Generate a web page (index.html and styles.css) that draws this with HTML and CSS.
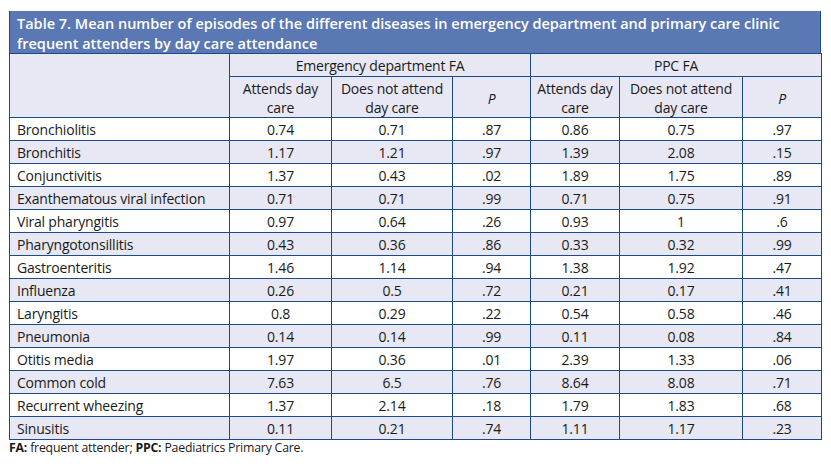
FILE: index.html
```html
<!DOCTYPE html>
<html>
<head>
<meta charset="utf-8">
<link rel="stylesheet" href="styles.css">
</head>
<body>
<div class="wrap">
  <div class="title">Table 7. Mean number of episodes of the different diseases in emergency department and primary care clinic frequent attenders by day care attendance</div>
  <table class="data">
    <colgroup>
      <col class="c1"><col class="c2"><col class="c3"><col class="c4"><col class="c5"><col class="c6"><col class="c7">
    </colgroup>
    <thead>
      <tr class="h1">
        <th rowspan="2"></th>
        <th colspan="3">Emergency department FA</th>
        <th colspan="3">PPC FA</th>
      </tr>
      <tr class="h2">
        <th>Attends day care</th>
        <th>Does not attend day care</th>
        <th><i>P</i></th>
        <th>Attends day care</th>
        <th>Does not attend day care</th>
        <th><i>P</i></th>
      </tr>
    </thead>
    <tbody>
      <tr><td>Bronchiolitis</td><td>0.74</td><td>0.71</td><td>.87</td><td>0.86</td><td>0.75</td><td>.97</td></tr>
      <tr><td>Bronchitis</td><td>1.17</td><td>1.21</td><td>.97</td><td>1.39</td><td>2.08</td><td>.15</td></tr>
      <tr><td>Conjunctivitis</td><td>1.37</td><td>0.43</td><td>.02</td><td>1.89</td><td>1.75</td><td>.89</td></tr>
      <tr><td>Exanthematous viral infection</td><td>0.71</td><td>0.71</td><td>.99</td><td>0.71</td><td>0.75</td><td>.91</td></tr>
      <tr><td>Viral pharyngitis</td><td>0.97</td><td>0.64</td><td>.26</td><td>0.93</td><td>1</td><td>.6</td></tr>
      <tr><td>Pharyngotonsillitis</td><td>0.43</td><td>0.36</td><td>.86</td><td>0.33</td><td>0.32</td><td>.99</td></tr>
      <tr><td>Gastroenteritis</td><td>1.46</td><td>1.14</td><td>.94</td><td>1.38</td><td>1.92</td><td>.47</td></tr>
      <tr><td>Influenza</td><td>0.26</td><td>0.5</td><td>.72</td><td>0.21</td><td>0.17</td><td>.41</td></tr>
      <tr><td>Laryngitis</td><td>0.8</td><td>0.29</td><td>.22</td><td>0.54</td><td>0.58</td><td>.46</td></tr>
      <tr><td>Pneumonia</td><td>0.14</td><td>0.14</td><td>.99</td><td>0.11</td><td>0.08</td><td>.84</td></tr>
      <tr><td>Otitis media</td><td>1.97</td><td>0.36</td><td>.01</td><td>2.39</td><td>1.33</td><td>.06</td></tr>
      <tr><td>Common cold</td><td>7.63</td><td>6.5</td><td>.76</td><td>8.64</td><td>8.08</td><td>.71</td></tr>
      <tr><td>Recurrent wheezing</td><td>1.37</td><td>2.14</td><td>.18</td><td>1.79</td><td>1.83</td><td>.68</td></tr>
      <tr><td>Sinusitis</td><td>0.11</td><td>0.21</td><td>.74</td><td>1.11</td><td>1.17</td><td>.23</td></tr>
    </tbody>
  </table>
  <p class="note"><b>FA:</b> frequent attender; <b>PPC:</b> Paediatrics Primary Care.</p>
</div>
</body>
</html>
```
FILE: styles.css
```css
html, body {
  margin: 0;
  padding: 0;
  background: #ffffff;
}
body {
  font-family: "Open Sans", "Noto Sans", sans-serif;
  color: #1a1a1a;
}
.wrap {
  width: 812px;
  padding: 11px 0 0 9px;
}
.title {
  background: #5a78b3;
  color: #ffffff;
  font-weight: 600;
  font-size: 14.5px;
  line-height: 20px;
  padding: 3px 8px 0 7px;
  border-left: 1px solid #1d4b8a;
  border-right: 1px solid #1d4b8a;
  height: 39px;
}
.data {
  width: 812px;
  border-collapse: collapse;
  table-layout: fixed;
  font-size: 14px;
  letter-spacing: -0.2px;
}
.c1 { width: 220px; }
.c2 { width: 102px; }
.c3 { width: 121px; }
.c4 { width: 78px; }
.c5 { width: 89px; }
.c6 { width: 123px; }
.c7 { width: 79px; }
.data th, .data td {
  border: 1px solid #1d4b8a;
  padding: 0 6px;
  text-align: center;
  font-weight: 400;
}
.data thead th {
  background: #e7e8f4;
  line-height: 19px;
}
.data thead tr.h1 th {
  height: 21px;
  padding-top: 1px;
}
.data thead tr.h2 th {
  height: 38px;
  padding: 2px 4px 0 4px;
}
.data tbody td {
  height: 20px;
  line-height: 20px;
  padding-top: 2px;
  padding-bottom: 0;
}
.data tbody td:first-child {
  text-align: left;
  padding-left: 7px;
}
.data tbody tr:nth-child(even) td {
  background: #e7e8f4;
}
.note {
  margin: 0;
  font-size: 12.3px;
  line-height: 16px;
  letter-spacing: -0.2px;
  color: #1a1a1a;
}
.note b {
  font-weight: 700;
}
```
